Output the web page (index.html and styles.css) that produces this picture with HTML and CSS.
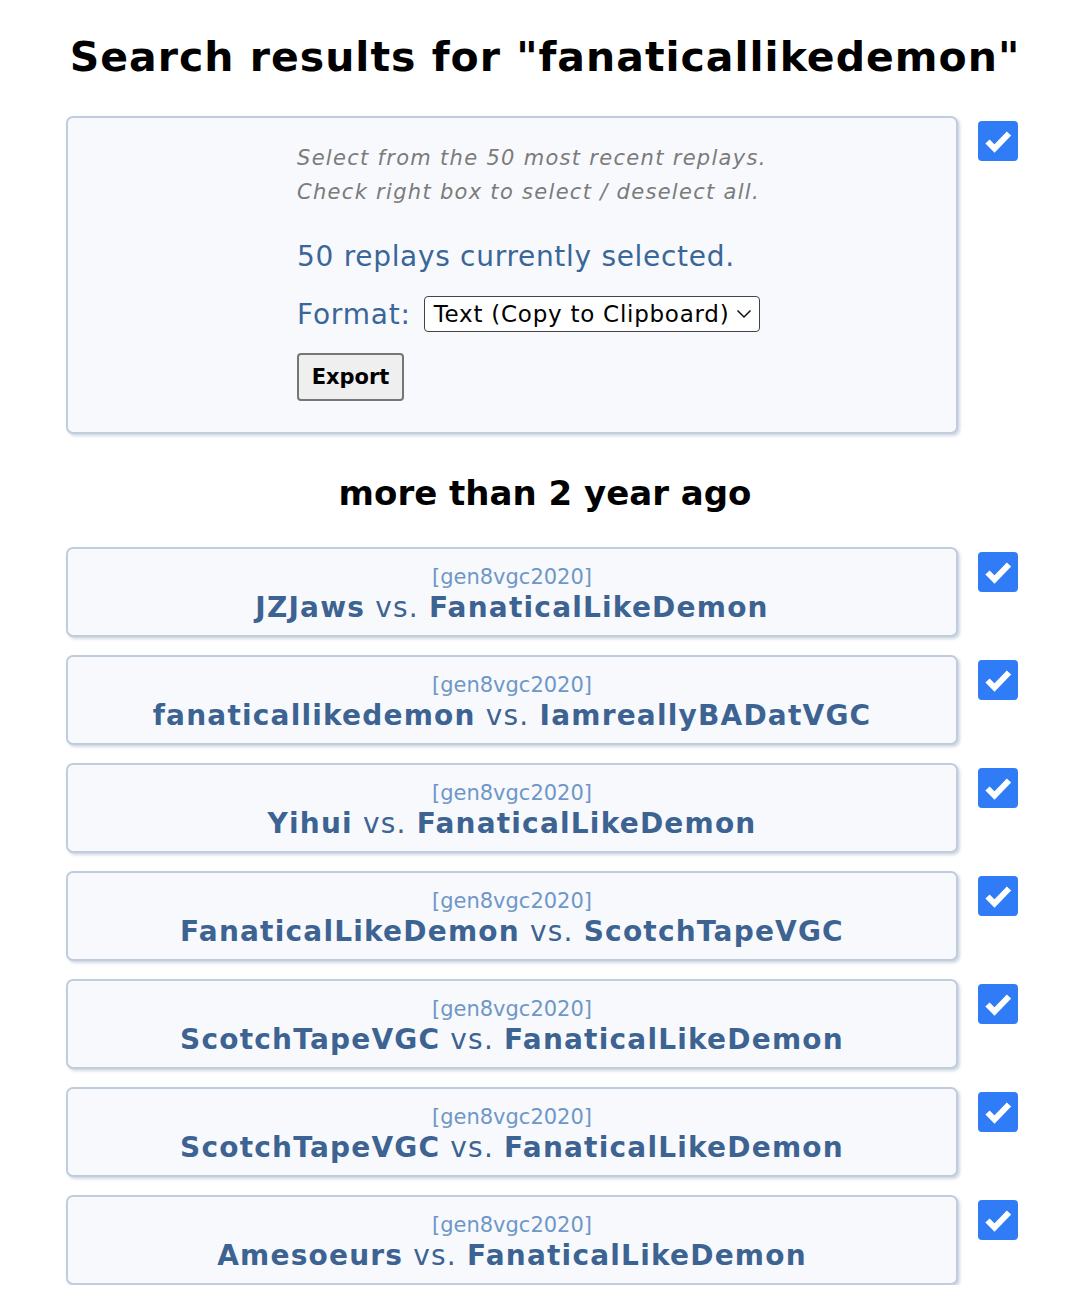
FILE: index.html
```html
<!DOCTYPE html>
<html>
<head>
<meta charset="utf-8">
<link rel="stylesheet" href="styles.css">
</head>
<body>
<h1 class="title">Search results for "fanaticallikedemon"</h1>
<div class="list">
  <div class="row">
    <div class="panel">
      <div class="panel-inner">
        <p class="hint">Select from the 50 most recent replays.<br>Check right box to select / deselect all.</p>
        <p class="count">50 replays currently selected.</p>
        <div class="format">
          <span class="format-label">Format:</span>
          <span class="select">Text (Copy to Clipboard)<svg class="chev" width="16" height="10" viewBox="0 0 16 10"><path d="M1.5 1.5 L8 8 L14.5 1.5" fill="none" stroke="#111" stroke-width="1.5"/></svg></span>
        </div>
        <button class="export">Export</button>
      </div>
    </div>
    <span class="check panel-check"><svg width="40" height="40" viewBox="0 0 40 40"><path d="M9.5 20.5 L16.5 27.5 L31 12.5" fill="none" stroke="#fff" stroke-width="6"/></svg></span>
  </div>

  <h2 class="group">more than 2 year ago</h2>

  <div class="row">
    <div class="card"><div class="fmt">[gen8vgc2020]</div><div class="players"><b>JZJaws</b> vs. <b>FanaticalLikeDemon</b></div></div>
    <span class="check"><svg width="40" height="40" viewBox="0 0 40 40"><path d="M9.5 20.5 L16.5 27.5 L31 12.5" fill="none" stroke="#fff" stroke-width="6"/></svg></span>
  </div>
  <div class="row">
    <div class="card"><div class="fmt">[gen8vgc2020]</div><div class="players"><b>fanaticallikedemon</b> vs. <b>IamreallyBADatVGC</b></div></div>
    <span class="check"><svg width="40" height="40" viewBox="0 0 40 40"><path d="M9.5 20.5 L16.5 27.5 L31 12.5" fill="none" stroke="#fff" stroke-width="6"/></svg></span>
  </div>
  <div class="row">
    <div class="card"><div class="fmt">[gen8vgc2020]</div><div class="players"><b>Yihui</b> vs. <b>FanaticalLikeDemon</b></div></div>
    <span class="check"><svg width="40" height="40" viewBox="0 0 40 40"><path d="M9.5 20.5 L16.5 27.5 L31 12.5" fill="none" stroke="#fff" stroke-width="6"/></svg></span>
  </div>
  <div class="row">
    <div class="card"><div class="fmt">[gen8vgc2020]</div><div class="players"><b>FanaticalLikeDemon</b> vs. <b>ScotchTapeVGC</b></div></div>
    <span class="check"><svg width="40" height="40" viewBox="0 0 40 40"><path d="M9.5 20.5 L16.5 27.5 L31 12.5" fill="none" stroke="#fff" stroke-width="6"/></svg></span>
  </div>
  <div class="row">
    <div class="card"><div class="fmt">[gen8vgc2020]</div><div class="players"><b>ScotchTapeVGC</b> vs. <b>FanaticalLikeDemon</b></div></div>
    <span class="check"><svg width="40" height="40" viewBox="0 0 40 40"><path d="M9.5 20.5 L16.5 27.5 L31 12.5" fill="none" stroke="#fff" stroke-width="6"/></svg></span>
  </div>
  <div class="row">
    <div class="card"><div class="fmt">[gen8vgc2020]</div><div class="players"><b>ScotchTapeVGC</b> vs. <b>FanaticalLikeDemon</b></div></div>
    <span class="check"><svg width="40" height="40" viewBox="0 0 40 40"><path d="M9.5 20.5 L16.5 27.5 L31 12.5" fill="none" stroke="#fff" stroke-width="6"/></svg></span>
  </div>
  <div class="row">
    <div class="card"><div class="fmt">[gen8vgc2020]</div><div class="players"><b>Amesoeurs</b> vs. <b>FanaticalLikeDemon</b></div></div>
    <span class="check"><svg width="40" height="40" viewBox="0 0 40 40"><path d="M9.5 20.5 L16.5 27.5 L31 12.5" fill="none" stroke="#fff" stroke-width="6"/></svg></span>
  </div>
</div>
</body>
</html>
```

FILE: styles.css
```css
* { box-sizing: border-box; }
body {
  margin: 0;
  background: #fff;
  font-family: "DejaVu Sans", Verdana, sans-serif;
  color: #000;
}
.title {
  margin: 30px 0 0;
  padding-left: 18px;
  text-align: center;
  font-size: 41px;
  line-height: 54px;
  letter-spacing: 1px;
  font-weight: bold;
}
.list {
  width: 952px;
  margin: 32px 0 0 66px;
  display: flex;
  flex-direction: column;
  gap: 18px;
}
.row {
  display: flex;
  align-items: flex-start;
  gap: 20px;
}
.panel, .card {
  width: 892px;
  flex: none;
  background: #f8f9fc;
  border: 2px solid #bfcddf;
  border-radius: 7px;
  box-shadow: 2px 2px 3px rgba(120, 140, 170, 0.35);
}
.panel {
  height: 318px;
  padding: 23px 0 0 229px;
}
.hint {
  margin: 0;
  font-style: italic;
  font-size: 21px;
  line-height: 34px;
  letter-spacing: 1.3px;
  color: #7b7b7b;
}
.count {
  margin: 28px 0 0;
  font-size: 28px;
  line-height: 40px;
  letter-spacing: 0.7px;
  color: #3a6699;
}
.format {
  margin-top: 19px;
  display: flex;
  align-items: center;
  gap: 13px;
}
.format-label {
  font-size: 28px;
  letter-spacing: 0.8px;
  color: #3a6699;
}
.select {
  display: inline-flex;
  align-items: center;
  gap: 7px;
  height: 36px;
  padding: 0 7px 0 9px;
  border: 1.5px solid #444;
  border-radius: 4px;
  background: #fff;
  font-size: 23px;
  letter-spacing: 0.75px;
  color: #000;
}
.export {
  margin-top: 21px;
  width: 107px;
  height: 48px;
  padding: 0;
  background: #efefef;
  border: 2px solid #767676;
  border-radius: 4px;
  font-family: "DejaVu Sans", Verdana, sans-serif;
  font-weight: bold;
  font-size: 21px;
  color: #000;
}
.check {
  width: 40px;
  height: 40px;
  flex: none;
  background: #2f7cf6;
  border-radius: 4px;
  display: block;
  margin-top: 5px;
}
.check svg { display: block; }
.group {
  margin: 19px 0 14px;
  padding-left: 6px;
  text-align: center;
  font-size: 34px;
  line-height: 44px;
  font-weight: bold;
}
.card {
  height: 90px;
  padding-top: 15px;
  text-align: center;
}
.fmt {
  font-size: 21px;
  line-height: 26px;
  color: #6e97c8;
}
.players {
  font-size: 28px;
  line-height: 36px;
  letter-spacing: 1.2px;
  color: #3c6392;
}
.players b { font-weight: bold; }
```
